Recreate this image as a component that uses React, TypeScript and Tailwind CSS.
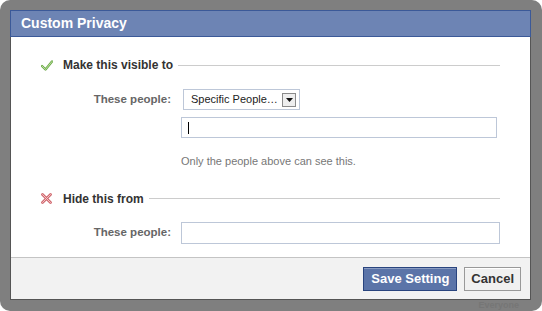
const font = { fontFamily: '"Liberation Sans", Arial, sans-serif' };

const CheckIcon = () => (
  <svg width="12" height="11" viewBox="0 0 12 11" className="shrink-0">
    <path d="M1 6 L4.5 9.5 L11 1.5" fill="none" stroke="#6fa84c" strokeWidth="2.4" strokeLinecap="round" strokeLinejoin="round" />
    <path d="M1 6 L4.5 9.5 L11 1.5" fill="none" stroke="#b6e29a" strokeWidth="1" strokeLinecap="round" strokeLinejoin="round" />
  </svg>
);

const CrossIcon = () => (
  <svg width="11" height="11" viewBox="0 0 11 11" className="shrink-0">
    <path d="M1.5 1.5 L9.5 9.5 M9.5 1.5 L1.5 9.5" fill="none" stroke="#cf6a70" strokeWidth="2.8" strokeLinecap="round" />
    <path d="M1.5 1.5 L9.5 9.5 M9.5 1.5 L1.5 9.5" fill="none" stroke="#f6c0c3" strokeWidth="1" strokeLinecap="round" />
  </svg>
);

const SectionHead = ({ icon, title }: { icon: React.ReactNode; title: string }) => (
  <div className="flex h-[16px] items-center">
    <div className="flex w-[22px] items-center">{icon}</div>
    <span className="text-[12px] font-bold text-[#333]">{title}</span>
    <div className="ml-[5px] h-px flex-1 bg-[#cccccc]" />
  </div>
);

const Label = ({ children }: { children: string }) => (
  <div className="w-[140px] pr-[10px] text-right text-[11.5px] font-bold text-[#666]">{children}</div>
);

export default function App() {
  return (
    <div className="h-[311px] w-[542px] overflow-hidden bg-white" style={font}>
      <div className="flex h-full w-full flex-col rounded-[10px] bg-[#7f7f7f] pl-[10px] pr-[11px] pt-[10px]">
        <div className="flex flex-1 flex-col border border-[#555555] border-t-0 bg-white">
          {/* header */}
          <div className="-mx-px flex h-[27px] items-center border border-[#3b5998] bg-[#6d84b4] px-[10px]">
            <span className="text-[14px] font-bold text-white">Custom Privacy</span>
          </div>

          {/* body */}
          <div className="flex flex-1 flex-col pl-[30px] pr-[30px] pt-[20px]">
            <SectionHead icon={<CheckIcon />} title="Make this visible to" />

            <div className="mt-[16px] flex items-center">
              <Label>These people:</Label>
              <div className="ml-[2px] flex h-[21px] w-[117px] items-center justify-between border border-[#bdc7d8] pl-[7px] pr-[3px] text-[11px] text-[#222]">
                <span>Specific People…</span>
                <div className="flex h-[14px] w-[14px] items-center justify-center border border-[#8a8a8a] bg-[#eeeeee]">
                  <svg width="7" height="4" viewBox="0 0 7 4">
                    <path d="M0 0 H7 L3.5 4 Z" fill="#111" />
                  </svg>
                </div>
              </div>
            </div>

            <div className="mt-[7px] flex">
              <div className="w-[140px]" />
              <div className="flex h-[21px] w-[316px] items-center border border-[#bdc7d8] pl-[6px]">
                <div className="h-[12px] w-px bg-black" />
              </div>
            </div>

            <div className="mt-[15px] flex">
              <div className="w-[140px]" />
              <span className="text-[11px] text-[#777]">Only the people above can see this.</span>
            </div>

            <div className="mt-[21px]">
              <SectionHead icon={<CrossIcon />} title="Hide this from" />
            </div>

            <div className="mt-[15px] flex items-center">
              <Label>These people:</Label>
              <div className="h-[22px] flex-1 border border-[#bdc7d8]" />
            </div>
          </div>

          {/* footer */}
          <div className="flex h-[42px] items-center justify-end gap-[7px] border-t border-[#c4c4c4] bg-[#f2f2f2] pr-[9px]">
            <button className="h-[24px] border border-[#29447e] bg-[#5b74a8] px-[7px] text-[13px] font-bold text-white shadow-[inset_0_1px_0_#8a9cc2]">
              Save Setting
            </button>
            <button className="h-[24px] border border-[#999999] bg-[#f0f0f0] px-[6px] text-[13px] font-bold text-[#333] shadow-[inset_0_1px_0_#ffffff]">
              Cancel
            </button>
          </div>
        </div>

        {/* faint page text showing through the frame */}
        <div className="flex h-[11px] items-center justify-end pr-[12px]">
          <span className="text-[9px] font-bold leading-none text-[#767676]">Everyone</span>
        </div>
      </div>
    </div>
  );
}
